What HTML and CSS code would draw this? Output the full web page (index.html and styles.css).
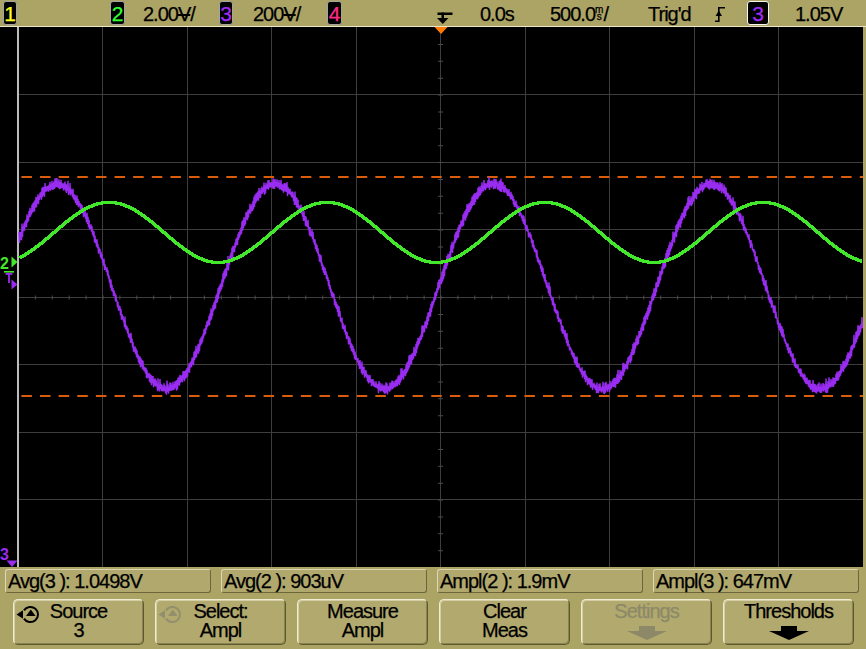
FILE: index.html
```html
<!DOCTYPE html>
<html lang="en">
<head>
<meta charset="utf-8">
<title>Oscilloscope – Measure</title>
<link rel="stylesheet" href="styles.css">
</head>
<body>
<div class="scope">
  <header class="topbar">
    <span class="ch ch1">1</span>
    <span class="ch ch2">2</span>
    <span class="val v2">2.00<span class="vdiv">V</span>/</span>
    <span class="ch ch3">3</span>
    <span class="val v3">200<span class="vdiv">V</span>/</span>
    <span class="ch ch4">4</span>
    <svg class="trigmark" width="16" height="26" viewBox="0 0 16 26" aria-hidden="true">
      <rect x="0.5" y="12.5" width="15" height="2.5" fill="#000"/>
      <rect x="4.5" y="12.5" width="2.5" height="6" fill="#000"/>
      <polygon points="0,18 11.5,18 5.75,24" fill="#000"/>
    </svg>
    <span class="val delay">0.0s</span>
    <span class="val tb">500.0<span class="ms"><i>m</i><i>s</i></span>/</span>
    <span class="val trigd">Trig'd</span>
    <span class="edgebox">
      <svg class="edge" width="12" height="26" viewBox="0 0 12 26" aria-hidden="true">
        <path d="M1 21.2 H4.8 V7.8 H11" fill="none" stroke="#000" stroke-width="1.6"/>
        <polygon points="1.6,16 4.8,10.5 8,16" fill="#000"/>
      </svg>
    </span>
    <span class="ch chsrc">3</span>
    <span class="val level">1.05V</span>
  </header>

  <main class="screen">
    <svg id="traces" class="plot" width="863" height="540" viewBox="0 0 863 540">
      <g class="grid" stroke="#3d3d3d" stroke-width="1">
        <line x1="102.5" y1="0" x2="102.5" y2="540"/>
        <line x1="187.5" y1="0" x2="187.5" y2="540"/>
        <line x1="271.5" y1="0" x2="271.5" y2="540"/>
        <line x1="356.5" y1="0" x2="356.5" y2="540"/>
        <line x1="440.5" y1="0" x2="440.5" y2="540"/>
        <line x1="525.5" y1="0" x2="525.5" y2="540"/>
        <line x1="609.5" y1="0" x2="609.5" y2="540"/>
        <line x1="694.5" y1="0" x2="694.5" y2="540"/>
        <line x1="778.5" y1="0" x2="778.5" y2="540"/>
        <line x1="18" y1="67.5" x2="863" y2="67.5"/>
        <line x1="18" y1="135.5" x2="863" y2="135.5"/>
        <line x1="18" y1="202.5" x2="863" y2="202.5"/>
        <line x1="18" y1="270.5" x2="863" y2="270.5"/>
        <line x1="18" y1="337.5" x2="863" y2="337.5"/>
        <line x1="18" y1="405.5" x2="863" y2="405.5"/>
        <line x1="18" y1="472.5" x2="863" y2="472.5"/>
      </g>
      <line class="ticks" x1="18" y1="270.5" x2="863" y2="270.5" stroke="#4c4c4c" stroke-width="4" stroke-dasharray="1 15.9"/>
      <line class="ticks" x1="440.5" y1="0" x2="440.5" y2="540" stroke="#4c4c4c" stroke-width="5" stroke-dasharray="1 15.875"/>
      <line class="border" x1="18" y1="0" x2="18" y2="540" stroke="#bcbcbc" stroke-width="2"/>
      <line class="thresh" x1="21.4" y1="150" x2="863" y2="150" stroke="#d95d0c" stroke-width="2" stroke-dasharray="10.5 8.13"/>
      <line class="thresh" x1="21.4" y1="369" x2="863" y2="369" stroke="#d95d0c" stroke-width="2" stroke-dasharray="10.5 8.13"/>
      <polyline id="ch3" fill="none" stroke="#982cf0" stroke-width="1.4" points=""/>
      <polyline id="ch2" fill="none" stroke="#42e82a" stroke-width="3" shape-rendering="crispEdges" points=""/>
      <polygon points="434.5,0 447.5,0 441,7" fill="#ff7a00"/>
      <text class="mk mk2" x="0" y="241.5">2</text>
      <polygon points="11.5,229.5 17.5,235 11.5,240.5" fill="#42e82a"/>
      <rect x="4" y="244" width="10" height="1.6" fill="#42e82a"/>
      <rect x="5.5" y="246" width="7" height="1.8" fill="#982cf0"/>
      <rect x="8.1" y="246" width="1.8" height="10" fill="#982cf0"/>
      <polygon points="11.5,252.5 17.5,257.5 11.5,262.5" fill="#982cf0"/>
      <text class="mk mk3" x="0" y="532.5">3</text>
      <polygon points="6.5,533.5 17.5,533.5 12,540" fill="#982cf0"/>
    </svg>
  </main>

  <section class="measures">
    <div class="meas">Avg(3 ): 1.0498V</div>
    <div class="meas">Avg(2 ): 903uV</div>
    <div class="meas">Ampl(2 ): 1.9mV</div>
    <div class="meas">Ampl(3 ): 647mV</div>
  </section>

  <nav class="softkeys">
    <div class="key">
      <svg class="knob" width="25" height="19" viewBox="0 0 25 19" aria-hidden="true">
        <path d="M8 13.6 A7.6 7.6 0 1 0 8 5.4" fill="none" stroke="currentColor" stroke-width="2"/>
        <polygon points="0.5,9.5 7,5.2 7,13.8" fill="currentColor"/>
        <polygon points="10,11 14.8,4.6 19.6,11" fill="currentColor"/>
      </svg>
      <span>Source</span><span>3</span>
    </div>
    <div class="key">
      <svg class="knob dimicon" width="25" height="19" viewBox="0 0 25 19" aria-hidden="true">
        <path d="M8 13.6 A7.6 7.6 0 1 0 8 5.4" fill="none" stroke="currentColor" stroke-width="2"/>
        <polygon points="0.5,9.5 7,5.2 7,13.8" fill="currentColor"/>
        <polygon points="10,11 14.8,4.6 19.6,11" fill="currentColor"/>
      </svg>
      <span>Select:</span><span>Ampl</span>
    </div>
    <div class="key"><span>Measure</span><span>Ampl</span></div>
    <div class="key"><span>Clear</span><span>Meas</span></div>
    <div class="key dim">
      <span>Settings</span>
      <svg class="arrow" width="40" height="14" viewBox="0 0 40 14" aria-hidden="true">
        <rect x="12" y="0" width="16" height="5" fill="currentColor"/>
        <polygon points="0,5 40,5 20,14" fill="currentColor"/>
      </svg>
    </div>
    <div class="key">
      <span>Thresholds</span>
      <svg class="arrow" width="40" height="14" viewBox="0 0 40 14" aria-hidden="true">
        <rect x="12" y="0" width="16" height="5" fill="currentColor"/>
        <polygon points="0,5 40,5 20,14" fill="currentColor"/>
      </svg>
    </div>
  </nav>
</div>
<script src="script.js"></script>
</body>
</html>
```

FILE: styles.css
```css
* { box-sizing: border-box; margin: 0; padding: 0; }
html, body { width: 866px; height: 649px; overflow: hidden; }
body {
  background: #aca465;
  font-family: "Liberation Sans", Arial, sans-serif;
  font-size: 20px;
  letter-spacing: -1px;
  color: #000;
  -webkit-text-stroke: 0.25px currentColor;
}

/* ---------- top status bar ---------- */
.topbar {
  height: 27px;
  border-bottom: 1px solid #e9e5c6;
  display: flex;
  align-items: center;
  background: #aca465;
}
.ch {
  flex: none;
  height: 24px;
  border: 1px solid #a4a4a4;
  border-radius: 3px;
  background: #000;
  display: flex;
  align-items: center;
  justify-content: center;
  font-size: 21px;
  line-height: 1;
  letter-spacing: 0;
}
.ch1 { margin-left: 3px; width: 14px; color: #ffff1e; }
.ch2 { margin-left: 93px; width: 15px; color: #33ff33; }
.ch3 { width: 14px; color: #a02cf5; }
.ch4 { width: 15px; color: #ff2a88; }
.chsrc { width: 22px; color: #a02cf5; border: 1.5px solid #f4f4f4; }

.val { flex: none; white-space: nowrap; line-height: 26px; padding-top: 1px; }
.v2 { margin-left: 18px; width: 76px; }
.v3 { margin-left: 20px; width: 74px; }
.vdiv { text-decoration: line-through; text-decoration-thickness: 1.5px; }
.trigmark { flex: none; margin-left: 95px; display: block; }
.delay { margin-left: 27px; width: 70px; }
.tb { width: 98px; }
.ms {
  display: inline-flex;
  flex-direction: column;
  vertical-align: top;
  margin-top: 5px;
  font-size: 10px;
  line-height: 7px;
  letter-spacing: 0;
}
.ms i { font-style: normal; display: block; text-align: center; }
.trigd { width: 66px; }
.edgebox { flex: none; width: 33px; display: flex; }
.edge { display: block; }
.level { margin-left: 26px; }

/* ---------- waveform screen ---------- */
.screen { width: 863px; height: 540px; background: #000; }
.plot { display: block; }
.mk {
  font-family: "Liberation Sans", Arial, sans-serif;
  font-size: 16px;
  font-weight: bold;
  letter-spacing: 0;
  -webkit-text-stroke: 0;
}
.mk2 { fill: #42e82a; }
.mk3 { fill: #982cf0; }

/* ---------- measurement readouts ---------- */
.measures {
  display: flex;
  gap: 10px;
  padding: 2px 0 0 5px;
}
.meas {
  flex: none;
  width: 206px;
  height: 24px;
  padding-left: 2px;
  line-height: 22px;
  white-space: nowrap;
  background: #b0a86c;
  border: 1px solid;
  border-color: #ddd8b3 #6c663a #6c663a #ddd8b3;
  border-radius: 3px;
}

/* ---------- softkeys ---------- */
.softkeys {
  display: flex;
  gap: 11px;
  padding: 6px 0 0 13px;
}
.key {
  flex: none;
  width: 131px;
  height: 46px;
  position: relative;
  display: flex;
  flex-direction: column;
  align-items: center;
  padding-top: 2px;
  line-height: 19px;
  background: #b1a96d;
  border: 1px solid;
  border-color: #f0ecd2 #5d5830 #5d5830 #f0ecd2;
  border-radius: 5px;
  box-shadow: inset 1px 1px 0 #d3cea6, inset -1px -1px 0 #8a844f;
  color: #000;
}
.key.dim { color: #8d8968; }
.knob { position: absolute; left: 2px; top: 5px; color: #000; }
.knob.dimicon { color: #928e6e; }
.arrow { display: block; margin-top: 5px; }
```

FILE: script.js
```js
(function () {
  var seed = 20240611;
  function rnd() {
    seed = (seed * 1103515245 + 12345) % 2147483648;
    return seed / 2147483648;
  }
  var P = 218;
  var g = [], p = [];
  for (var x = 19; x <= 862; x++) {
    var yg = Math.round(205 + 30 * Math.cos(2 * Math.PI * (x - 436) / P));
    g.push(x + ',' + yg);
    var yp = 259.5 - 102.5 * Math.cos(2 * Math.PI * (x - 57) / P);
    var spike = rnd() < 0.12 ? 3 : 0;
    p.push(x + ',' + (yp - 1.5 - rnd() * 4.5 - spike).toFixed(1));
    p.push((x + 0.5) + ',' + (yp + 1.5 + rnd() * 4.5).toFixed(1));
  }
  document.getElementById('ch2').setAttribute('points', g.join(' '));
  document.getElementById('ch3').setAttribute('points', p.join(' '));
})();
```
